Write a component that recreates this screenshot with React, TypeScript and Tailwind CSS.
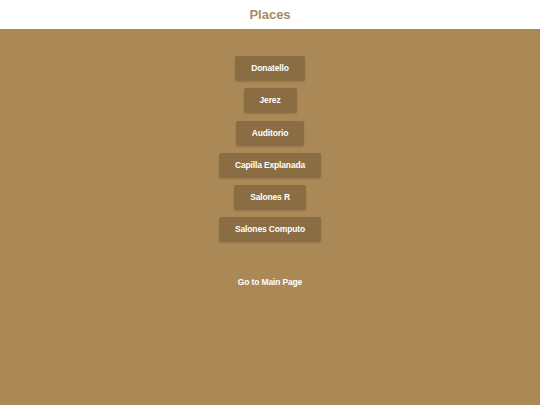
import React from 'react';

const places = ['Donatello', 'Jerez', 'Auditorio', 'Capilla Explanada', 'Salones R', 'Salones Computo'];

export default function App() {
  return (
    <div className="min-h-[405px] bg-[#ab8957] font-['Liberation_Sans',Arial,sans-serif]">
      <header className="h-[29px] bg-white flex items-center justify-center">
        <h1 className="text-[13px] font-bold text-[#a98b5e]">Places</h1>
      </header>
      <div className="flex flex-col items-center pt-[27px] gap-[7.25px]">
        {places.map((p) => (
          <button
            key={p}
            className="h-[25px] px-[16px] rounded-[2px] bg-[#8b6d43] text-white text-[8.5px] tracking-[-0.15px] font-bold shadow-[0_1px_2px_rgba(0,0,0,0.15)]"
          >
            {p}
          </button>
        ))}
      </div>
      <div className="flex justify-center mt-[34px]">
        <button className="text-white text-[8.5px] tracking-[-0.15px] font-bold">Go to Main Page</button>
      </div>
    </div>
  );
}
